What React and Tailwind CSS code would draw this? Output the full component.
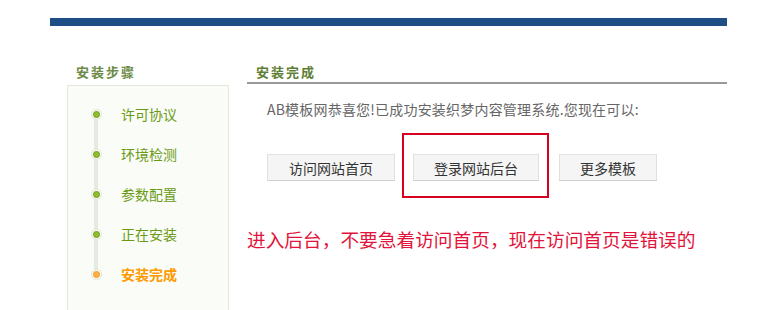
const cjk = { fontFamily: '"Microsoft YaHei", "Noto Sans CJK SC", sans-serif' };
const song = { fontFamily: '"SimSun", "Noto Sans CJK SC", sans-serif' };

const steps = ['许可协议', '环境检测', '参数配置', '正在安装', '安装完成'];

function StepDot({ active }) {
    return (
        <div className="relative z-10 w-[11px] h-[11px] rounded-full bg-[#f7f9f3] border border-[#e1e8d5] flex items-center justify-center">
            <div
                className={
                    active
                        ? 'w-[7px] h-[7px] rounded-full bg-[#fbb04a] border border-[#f39a22]'
                        : 'w-[7px] h-[7px] rounded-full bg-[#8fbf2a] border border-[#6e9a16]'
                }
            />
        </div>
    );
}

function Btn({ children }) {
    return (
        <button className="h-[27px] bg-[#f5f5f5] border border-[#e0e0e0] border-b-[#cfcfcf] text-[14px] text-[#333] leading-none">
            {children}
        </button>
    );
}

export default function App() {
    return (
        <div className="w-[762px] h-[310px] bg-white overflow-hidden pt-[18px]" style={cjk}>
            <div className="ml-[50px] w-[677px]">
                <div className="h-2 bg-[#1e4e86]" />
                <div className="flex gap-[18px]">
                    {/* sidebar */}
                    <div className="w-[179px] shrink-0 pt-[35px]">
                        <div className="h-[22px] leading-[22px] pl-[26px] text-[13px] font-bold tracking-[2px] text-[#6b8a45]" style={song}>
                            安装步骤
                        </div>
                        <div className="mt-[2px] ml-[17px] h-[240px] border border-[#e3e9d9] bg-[#fafcf7] pt-2 relative">
                            <div className="absolute left-[26px] top-[28px] h-[161px] w-[4px] bg-[#e6ebdf]" />
                            {steps.map((s, i) => {
                                const active = i === steps.length - 1;
                                return (
                                    <div key={s} className="h-10 flex items-center">
                                        <div className="ml-[23px]">
                                            <StepDot active={active} />
                                        </div>
                                        <span
                                            className={
                                                active
                                                    ? 'ml-[19px] text-[14px] font-bold text-[#ff9900]'
                                                    : 'ml-[19px] text-[14px] text-[#6a9a16]'
                                            }
                                        >
                                            {s}
                                        </span>
                                    </div>
                                );
                            })}
                        </div>
                    </div>

                    {/* main */}
                    <div className="flex-1 pt-[36px]">
                        <div className="h-[22px] leading-[20px] pl-[9px] border-b-2 border-[#999] text-[13px] font-bold tracking-[2px] text-[#5f7e35]" style={song}>
                            安装完成
                        </div>
                        <p className="mt-[15px] pl-[20px] text-[14px] tracking-[0.2px] leading-[20px] text-[#666]">
                            AB模板网恭喜您!已成功安装织梦内容管理系统.您现在可以:
                        </p>
                        <div className="mt-[14px] pl-[20px] flex items-start">
                            <div className="mt-[21px] w-[126px] flex">
                                <Btn><span className="px-[19px] block w-[126px]">访问网站首页</span></Btn>
                            </div>
                            <div className="ml-[9px] border-2 border-[#d7001e] pt-[19px] pb-[15px] pl-[9px] pr-[8px]">
                                <Btn><span className="block w-[124px]">登录网站后台</span></Btn>
                            </div>
                            <div className="ml-[10px] mt-[21px]">
                                <Btn><span className="block w-[96px]">更多模板</span></Btn>
                            </div>
                        </div>
                        <p className="mt-[28px] text-[18.7px] leading-[26px] text-[#e2133a]">
                            进入后台，不要急着访问首页，现在访问首页是错误的
                        </p>
                    </div>
                </div>
            </div>
        </div>
    );
}
